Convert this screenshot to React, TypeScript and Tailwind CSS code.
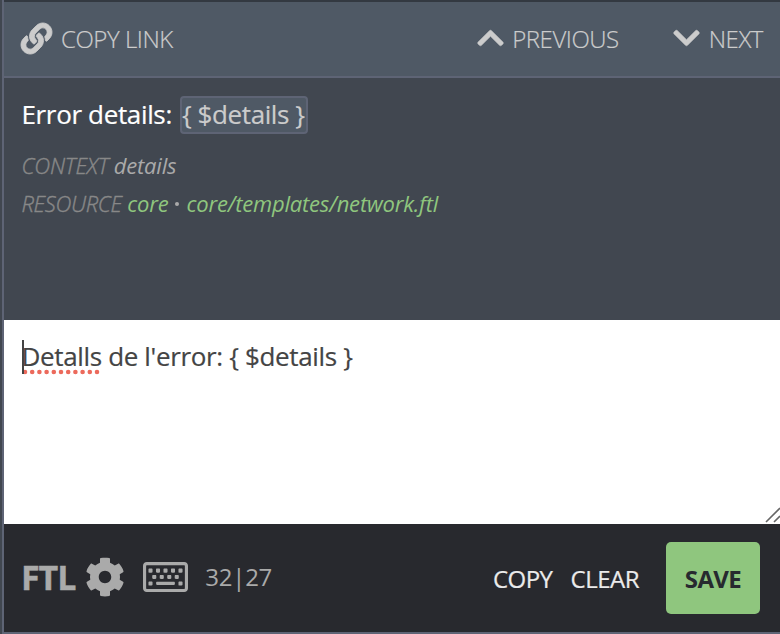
import React from 'react';
import { FaLink, FaChevronUp, FaChevronDown, FaCog, FaRegKeyboard } from 'react-icons/fa';

function Navigation() {
  return (
    <nav className="flex h-[78px] shrink-0 items-center border-b-2 border-[#5e6475] bg-[#4f5965] pb-[2px] pl-[17px] pr-[17px] text-[24px] font-light leading-[33px] tracking-[-0.45px] text-[#cccccc] [-webkit-text-stroke:0.2px] [border-top:2px_solid_#333941]">
      <button className="flex items-center">
        <FaLink className="h-[31px] w-[31px] overflow-visible [stroke-width:14px]" />
        <span className="ml-[9px]">COPY LINK</span>
      </button>
      <button className="ml-auto flex items-center">
        <FaChevronUp className="h-[30px] w-[27px] overflow-visible [stroke-width:10px]" />
        <span className="ml-[8px]">PREVIOUS</span>
      </button>
      <button className="ml-[54px] flex items-center">
        <FaChevronDown className="h-[30px] w-[27px] overflow-visible [stroke-width:10px]" />
        <span className="ml-[9px]">NEXT</span>
      </button>
    </nav>
  );
}

function SourceString() {
  return (
    <section className="h-[242px] shrink-0 bg-[#414750] pl-[17.5px] pt-[18px]">
      <p className="flex h-[38px] items-center text-[26px] leading-[36px] tracking-[-0.35px] text-white [-webkit-text-stroke:0.2px]">
        <span className="mr-[8px] h-[38px]">Error details:</span>
        <mark className="h-[38px] w-[128px] whitespace-nowrap rounded-[4px] border-2 border-[#5e6475] bg-[#4f5965] leading-[32px] tracking-[-0.4px] text-[#cccccc]">
          {'{ $details }'}
        </mark>
      </p>
      <p className="mt-[12px] text-[22px] italic leading-[38px] tracking-[-0.2px] text-[#aaaaaa]">
        <span className="font-light text-[#888888] [-webkit-text-stroke:0.4px]">CONTEXT</span> details
      </p>
      <p className="text-[22px] italic leading-[38px] tracking-[-0.2px] text-[#aaaaaa]">
        <span className="font-light tracking-[-0.35px] text-[#888888] [-webkit-text-stroke:0.4px]">RESOURCE</span>{' '}
        <span className="text-[#8fc67e]">core</span>
        <span className="mx-[7px] inline-block h-1 w-1 rounded-full bg-[#aaaaaa] align-[6px]" />
        <span className="text-[#8fc67e]">core/templates/network.ftl</span>
      </p>
    </section>
  );
}

function Editor() {
  return (
    <section className="relative h-[204px] shrink-0 bg-white pl-[17.5px] pt-[17px] text-[26px] leading-[38px] tracking-[-0.35px] text-[#444444] [-webkit-text-stroke:0.2px]">
      <span className="relative">
        Detalls
        <svg className="absolute left-0 top-[31px]" width="80" height="6">
          <line x1="3" y1="3" x2="78" y2="3" stroke="#ec6a5c" strokeWidth="4.6" strokeLinecap="round" strokeDasharray="0 7.2" />
        </svg>
      </span>{' '}
      de l'error: {'{ $details }'}
      <i className="absolute left-[18px] top-5 h-[34px] w-[2px] bg-[#444444]" />
      <svg className="absolute bottom-0 right-0" width="16" height="20">
        <path d="M2 18 16 4M10 18 16 12" stroke="#666" strokeWidth="1.6" />
      </svg>
    </section>
  );
}

function EditorMenu() {
  return (
    <footer className="flex h-[108px] shrink-0 items-center bg-[#28292e] pl-[17px] pr-5 text-[24px] leading-[33px] text-[#aaaaaa]">
      <button className="mb-[2px] text-[34px] font-bold leading-[40px] tracking-[-1.1px] [-webkit-text-stroke:0.4px]">FTL</button>
      <FaCog className="mb-[2px] ml-[10px] h-10 w-10" />
      <FaRegKeyboard className="mb-[2px] ml-[18px] h-10 w-[45px]" />
      <span className="mb-[3px] ml-[17px] tracking-[-0.25px]">32|27</span>
      <button className="ml-auto tracking-[-0.5px] text-[#ebebeb] [-webkit-text-stroke:0.2px]">COPY</button>
      <button className="ml-[18px] tracking-[-0.5px] text-[#ebebeb] [-webkit-text-stroke:0.2px]">CLEAR</button>
      <button className="ml-[27px] h-[72px] w-[94px] rounded-[5px] bg-[#8fc67e] font-bold tracking-[-0.6px] text-[#272a2f]">SAVE</button>
    </footer>
  );
}

export default function App() {
  return (
    <main className="h-[634px] w-[780px] overflow-hidden bg-[#414750] pl-[2px] font-['Open_Sans',sans-serif]">
      <div className="flex h-full flex-col border-b-2 border-l-2 border-[#5e6475]">
        <Navigation />
        <SourceString />
        <Editor />
        <EditorMenu />
      </div>
    </main>
  );
}
